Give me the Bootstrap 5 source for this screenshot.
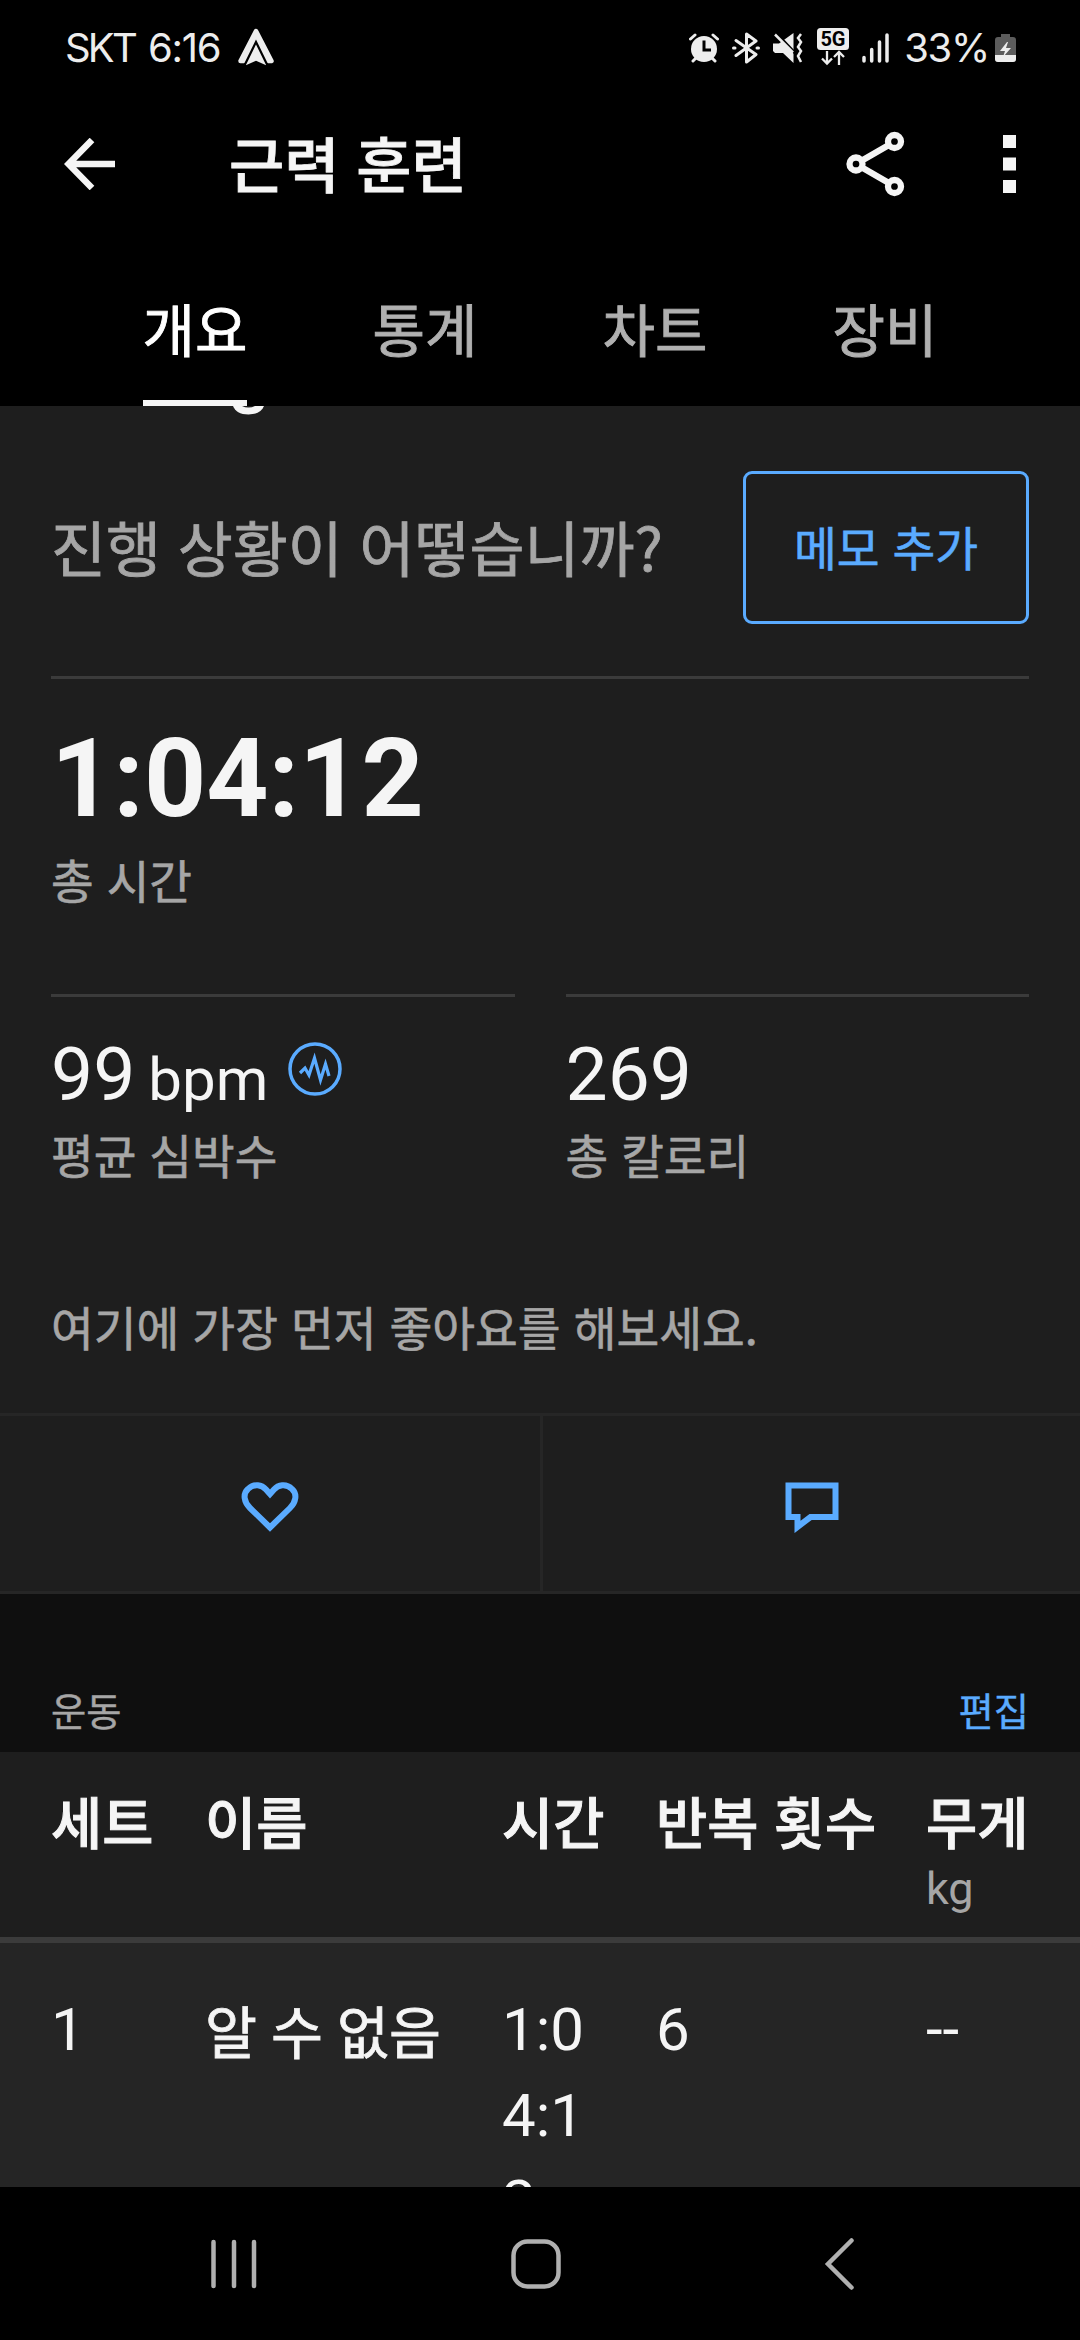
<!DOCTYPE html>
<html lang="ko">
<head>
<meta charset="utf-8">
<meta name="viewport" content="width=device-width, initial-scale=1">
<title>근력 훈련</title>
<link rel="stylesheet" href="https://cdn.jsdelivr.net/npm/bootstrap@5.3.0/dist/css/bootstrap.min.css">
<style>
  :root { --kr: "Noto Sans CJK KR", sans-serif; --num: Roboto, "Noto Sans CJK KR", sans-serif; --blue: #5aabff; --grey: #a6a6a6; --white: #f5f5f5; --rule: #3b3b3b; }
  body { margin: 0; background: #000; color: var(--white); font-family: var(--kr); width: 1080px; height: 2340px; overflow: hidden; white-space: nowrap; }
  svg { display: block; flex: none; }
  .t-grey { color: var(--grey); }
  .t-blue { color: var(--blue); }
  .num { font-family: var(--num); }
  .status { height: 96px; padding: 0 64px 0 65px; font-family: Inter, Roboto, sans-serif; color: #ededed; }
  .status-text { font-size: 40px; line-height: 96px; }
  .carrier { letter-spacing: -2.8px; }
  .clock { margin-left: 13px; letter-spacing: -1.3px; }
  .battery-pct { margin-left: 15px; letter-spacing: -1.3px; }
  .appbar { height: 136px; padding: 0 64px; }
  .screen-title { font-size: 60px; line-height: 131px; height: 136px; font-weight: 500; margin-left: 113px; -webkit-text-stroke: .8px; }
  .tabs { height: 174px; padding-left: 80px; }
  .tab-link { width: 230px; font-size: 57px; line-height: 80px; padding-top: 55px; color: #b0b0b0; -webkit-text-stroke: .9px; }
  .tab-link.on { color: #fff; }
  .tab-line { width: 104px; height: 6px; background: #f5f5f5; margin-top: 33px; }
  .sheet { background: #1e1e1e; height: 1188px; }
  .memo { height: 270px; padding: 65px 51px 0; }
  .memo-q { font-size: 59.8px; line-height: 80px; margin-top: 35px; -webkit-text-stroke: .8px; }
  .memo-btn { width: 286px; height: 153px; border: 3px solid var(--blue); border-radius: 9px; font-size: 46.5px; --bs-btn-color: var(--blue); -webkit-text-stroke: .6px; }
  .rule { height: 3px; background: var(--rule); }
  .px-51 { padding-left: 51px; padding-right: 51px; }
  .total { height: 315px; padding-top: 38px; }
  .total-time { font-size: 108.6px; line-height: 124px; font-weight: 700; }
  .total-cap { margin-top: 8px; }
  .caption-kr { font-size: 46.4px; line-height: 60px; -webkit-text-stroke: .6px; }
  .stats { gap: 51px; height: 238px; }
  .stat-val { font-size: 75px; line-height: 88px; height: 88px; margin-top: 33px; margin-bottom: 6px; }
  .stat-unit { font-size: 60px; margin-left: 13px; line-height: 1; }
  .pulse { margin-left: 20px; margin-bottom: 10px; }
  .first-like { height: 181px; font-size: 46.5px; line-height: 60px; padding-top: 64px; -webkit-text-stroke: .6px; }
  .social { height: 181px; border-top: 3px solid #262626; border-bottom: 3px solid #262626; }
  .social > div { padding-top: 6px; }
  .social > div + div { border-left: 3px solid #262626; }
  .section-bar { height: 158px; background: #0f0f0f; font-size: 38.3px; line-height: 56px; padding-bottom: 14px; -webkit-text-stroke: .4px; }
  .sets { display: grid; grid-template-columns: 154px 297px 154px 270px 1fr; padding: 0 51px; }
  .sets-head { background: #1e1e1e; height: 185px; font-size: 55.6px; font-weight: 500; padding-top: 28px; line-height: 80px; -webkit-text-stroke: 1px; }
  .sets-row { background: #252525; height: 244px; overflow: hidden; font-size: 60px; line-height: 86px; padding-top: 44px; }
  .sets-kr { font-size: 56.5px; padding-top: 5px; -webkit-text-stroke: .8px; }
  .time-cell { width: 84px; word-break: break-all; white-space: normal; }
  .kg { font-size: 45px; line-height: 58px; font-weight: 400; -webkit-text-stroke: 0; }
  .rule-thick { height: 6px; }
  .sysnav { height: 153px; }
</style>
<script src="https://cdn.jsdelivr.net/npm/bootstrap@5.3.0/dist/js/bootstrap.bundle.min.js"></script>
</head>
<body>
<header class="status d-flex align-items-center justify-content-between">
  <div class="d-flex align-items-center status-text">
    <span class="carrier">SKT</span><span class="clock">6:16</span>
    <svg width="38" height="40" viewBox="0 0 38 40" style="margin-left:17px"><path d="M19 3 34.500 33H31L19 12 7 33H3.500Z" fill="#ededed" stroke="#ededed" stroke-width="4.500" stroke-linejoin="round"/><path d="M19 14 31.500 39.500 19 34 6.500 39.500Z" fill="#ededed" stroke="#000" stroke-width="2.200"/></svg>
  </div>
  <div class="d-flex align-items-center status-text">
    <svg width="30" height="30" viewBox="0 0 30 30" fill="none" stroke="#ededed" stroke-linecap="round"><circle cx="15" cy="16" r="13" fill="#ededed" stroke="none"/><path d="M1.500 6 6 2M28.500 6 24 2M4 28 7 25M26 28 23 25" stroke-width="3"/><path d="M15 9v8h5.500" stroke="#000" stroke-width="3" stroke-linecap="square"/></svg>
    <svg width="28" height="32" viewBox="0 0 28 32" style="margin-left:13px" fill="none" stroke="#ededed" stroke-width="3" stroke-linecap="round" stroke-linejoin="round"><path d="M4 8.500 24 22.500 14.500 30V2L24 9 4 23.500M1.500 16h1.500M25 16h1.500"/></svg>
    <svg width="30" height="30" viewBox="0 0 30 30" style="margin-left:13px"><path d="M0 10.500h6L20.500 0v30L10 20H2l-2-2Z" fill="#ededed"/><path d="M1-2 22 20" stroke="#000" stroke-width="3"/><path d="M2 1.500 20 19.500" stroke="#ededed" stroke-width="2.500"/><path d="M28 1l-3 4 3 4-3 5 3 4-3 5 3 6" fill="none" stroke="#ededed" stroke-width="2.500"/></svg>
    <svg width="32" height="38" viewBox="0 0 32 38" style="margin-left:14px;margin-top:-2px"><rect width="32" height="22" rx="3.500" fill="#ededed"/><text x="16" y="18" text-anchor="middle" font-family="Roboto" font-weight="700" font-size="20" textLength="25" fill="#000">5G</text><path d="M10 23v12M5 30.500l5 5 5-5M22 37V24.500M17 29l5-5 5 5" fill="none" stroke="#ededed" stroke-width="2.300"/></svg>
    <svg width="27" height="30" viewBox="0 0 27 30" style="margin-left:13px" stroke="#ededed" stroke-width="3.500" stroke-linecap="round"><path d="M2 24.500V28M9.700 16.500V28M17.500 9V28M25 2V28"/></svg>
    <span class="battery-pct">33%</span>
    <svg width="21" height="30" viewBox="0 0 21 30" style="margin-left:6px"><path d="M6 1h9v3h3q3 0 3 3v19q0 3-3 3H3q-3 0-3-3V7q0-3 3-3h3Z" fill="#5c5c5c"/><path d="M0 22h21v4q0 3-3 3H3q-3 0-3-3Z" fill="#ededed"/><path d="M12 9 5 18h5l-2 6 8-9h-5l2-6Z" fill="#ededed"/></svg>
  </div>
</header>

<nav class="appbar d-flex align-items-center">
  <svg width="52" height="52" viewBox="0 0 52 52" fill="none" stroke="#f5f5f5" stroke-width="6.500"><path d="M51 26H6M28 2 4.500 26 28 50"/></svg>
  <div class="screen-title">근력 훈련</div>
  <svg class="ms-auto" width="60" height="66" viewBox="0 0 60 66" fill="none" stroke="#f5f5f5" stroke-width="6.300"><path d="M16 29.500 42 14.500M16 36.500 42 51.500"/><circle cx="10" cy="33" r="6.500"/><circle cx="48.500" cy="10.500" r="6.500"/><circle cx="48.500" cy="55.500" r="6.500"/></svg>
  <svg width="13" height="60" viewBox="0 0 13 60" style="margin-left:97px" fill="#f5f5f5"><path d="M0 1h13v13H0zM0 23.500h13v13H0zM0 46h13v13H0z"/></svg>
</nav>

<div class="tabs d-flex">
  <div class="tab-link on text-center d-flex flex-column align-items-center">개요<div class="tab-line"></div></div>
  <div class="tab-link text-center">통계</div>
  <div class="tab-link text-center">차트</div>
  <div class="tab-link text-center">장비</div>
</div>

<main>
  <section class="sheet position-relative">
    <svg class="position-absolute" width="31" height="9" viewBox="0 0 31 9" style="left:233px;top:0"><path d="M0 0H31C29 5 24 8.500 15.500 8.500S2 5 0 0Z" fill="#f5f5f5"/><path d="M9 0h13q-3 1.500-6.500 1.500T9 0Z" fill="#1e1e1e"/></svg>
    <div class="memo d-flex align-items-start justify-content-between">
      <div class="memo-q t-grey">진행 상황이 어떻습니까?</div>
      <button class="btn memo-btn p-0 pb-1">메모 추가</button>
    </div>
    <div class="px-51">
      <div class="rule"></div>
      <div class="total">
        <div class="total-time num">1:04:12</div>
        <div class="caption-kr t-grey total-cap">총 시간</div>
      </div>
      <div class="stats d-flex">
        <div class="flex-fill w-50">
          <div class="rule"></div>
          <div class="d-flex stat-val num align-items-center">
            <div>99<span class="stat-unit">bpm</span></div>
            <svg class="pulse" width="54" height="54" viewBox="0 0 54 54" fill="none" stroke="#5aabff"><circle cx="27" cy="27" r="25" stroke-width="3.500"/><path d="M12 31 17 26 21 33 26.500 16 32.500 38 37.500 22 41 34" stroke-width="3.200"/></svg>
          </div>
          <div class="caption-kr t-grey">평균 심박수</div>
        </div>
        <div class="flex-fill w-50">
          <div class="rule"></div>
          <div class="stat-val num">269</div>
          <div class="caption-kr t-grey">총 칼로리</div>
        </div>
      </div>
    </div>
    <div class="first-like px-51 t-grey">여기에 가장 먼저 좋아요를 해보세요.</div>
    <div class="social d-flex">
      <div class="w-50 d-flex align-items-center justify-content-center">
        <svg width="60" height="52" viewBox="0 0 60 52" fill="none" stroke="#5aabff" stroke-width="6"><path d="M30 46.500 10 27C4 21 2.500 13 8 8 14 2 22 4 26 8.500L30 13 34 8.500C38 4 46 2 52 8 57.500 13 56 21 50 27Z"/></svg>
      </div>
      <div class="w-50 d-flex align-items-center justify-content-center">
        <svg width="54" height="52" viewBox="0 0 54 52" fill="none" stroke="#5aabff" stroke-width="6"><path d="M3.500 4.500H50.500V36H25.500L12.500 46V36H3.500Z"/></svg>
      </div>
    </div>
  </section>

  <div class="section-bar px-51 d-flex justify-content-between align-items-end">
    <span class="t-grey">운동</span><span class="t-blue">편집</span>
  </div>
  <div class="sets sets-head">
    <div>세트</div><div>이름</div><div>시간</div><div>반복 횟수</div>
    <div>무게<div class="kg num t-grey">kg</div></div>
  </div>
  <div class="rule rule-thick"></div>
  <div class="sets sets-row num">
    <div>1</div><div class="sets-kr">알 수 없음</div><div class="time-cell">1:04:12</div><div>6</div><div>--</div>
  </div>
</main>

<footer class="sysnav">
  <svg width="1080" height="153" viewBox="0 0 1080 153" fill="none" stroke="#b0b0b0" stroke-width="4.500" stroke-linecap="round"><path d="M213.500 55V99M234 55V99M254 55V99"/><rect x="513.500" y="54.500" width="45" height="45" rx="14"/><path d="M851.500 53.500 828 77 851.500 100.500"/></svg>
</footer>
</body>
</html>
